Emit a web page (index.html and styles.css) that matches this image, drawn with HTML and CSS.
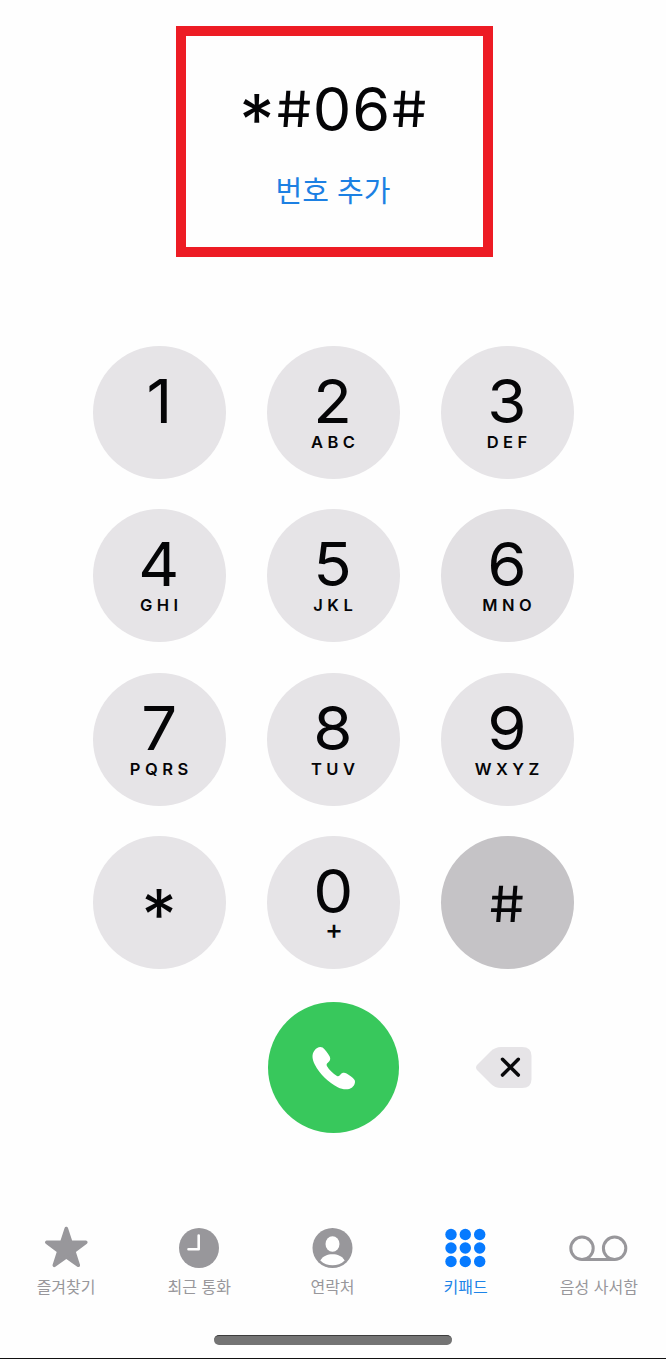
FILE: index.html
```html
<!DOCTYPE html>
<html lang="ko">
<head>
<meta charset="utf-8">
<title>키패드</title>
<link rel="stylesheet" href="styles.css">
</head>
<body>
<div class="phone">
  <header class="entry">
    <div class="number"><span class="star">*</span><span class="hash">#</span><span class="num">0</span><span class="num">6</span><span class="hash">#</span></div>
    <a class="add">번호 추가</a>
  </header>

  <main class="keypad">
    <button class="key"><span class="digit">1</span></button>
    <button class="key"><span class="digit">2</span><span class="letters">ABC</span></button>
    <button class="key"><span class="digit">3</span><span class="letters">DEF</span></button>
    <button class="key"><span class="digit">4</span><span class="letters">GHI</span></button>
    <button class="key"><span class="digit">5</span><span class="letters">JKL</span></button>
    <button class="key key-soft"><span class="digit">6</span><span class="letters">MNO</span></button>
    <button class="key"><span class="digit">7</span><span class="letters">PQRS</span></button>
    <button class="key"><span class="digit">8</span><span class="letters">TUV</span></button>
    <button class="key"><span class="digit">9</span><span class="letters">WXYZ</span></button>
    <button class="key"><span class="star key-star">*</span></button>
    <button class="key"><span class="digit">0</span><span class="plus">+</span></button>
    <button class="key key-pressed"><span class="hash key-hash">#</span></button>
  </main>

  <div class="actions">
    <button class="call" aria-label="통화">
      <svg width="131" height="131" viewBox="0 0 131 131"><path fill="#fff" d="M46.500 48.500C48.500 45.400 52.200 44 54.600 45.600C57 47.500 59.900 51.500 61.700 54.600C62.900 57.100 61.900 59.300 60.100 60.600C58.800 61.600 58.200 62.600 58.900 64C61.200 68 65 71.700 69 73.900C70.400 74.600 71.400 74 72.300 72.800C73.900 70.700 76.300 70.300 78.600 71.600C81.700 73.400 84.800 75.700 86.400 77.700C87.800 79.800 86.700 83.300 84.100 85.400C80.500 88.200 75 87.900 69.700 85.200C60.700 80.500 51.600 71.800 46.900 62.700C44.100 57.200 43.500 52.400 46.500 48.500Z"/></svg>
    </button>
    <button class="delete" aria-label="삭제">
      <svg width="56" height="41" viewBox="0 0 56 41"><path fill="#e6e4e7" d="M1 18L14.500 4.500Q19 0 25 0H46Q55.500 0 55.500 9V32Q55.500 41 46 41H25Q19 41 14.500 36.500L1 23Q-1 20.500 1 18Z"/><path d="M26.500 12.300L42.300 28.100M42.300 12.300L26.500 28.100" stroke="#09090b" stroke-width="3.500" stroke-linecap="round"/></svg>
    </button>
  </div>

  <nav class="tabs">
    <a class="tab"><svg width="60" height="44" viewBox="0 0 60 44"><path d="M30.300 3.500L34.800 17.300H49.800L37.800 26.300L42.300 40.300L30.300 31.700L18.300 40.300L22.800 26.300L10.800 17.300H25.800Z" fill="#98979b" stroke="#98979b" stroke-width="3.600" stroke-linejoin="round"/></svg><span>즐겨찾기</span></a>
    <a class="tab"><svg width="60" height="44" viewBox="0 0 60 44"><circle cx="30" cy="23" r="20" fill="#98979b"/><path d="M29.700 10.500V24.200H19.500" fill="none" stroke="#fff" stroke-width="2.600" stroke-linecap="round" stroke-linejoin="round"/></svg><span>최근 통화</span></a>
    <a class="tab"><svg width="60" height="44" viewBox="0 0 60 44"><circle cx="30.500" cy="23" r="20" fill="#98979b"/><ellipse cx="30.500" cy="19" rx="7" ry="7.700" fill="#fff"/><path d="M18.300 35.500C21 31 25.500 29.300 30.500 29.300S40 31 42.700 35.500C39.300 38.900 35 40.300 30.500 40.300S21.700 38.900 18.300 35.500Z" fill="#fff"/></svg><span>연락처</span></a>
    <a class="tab tab-active"><svg width="60" height="44" viewBox="0 0 60 44" fill="#067aff"><circle cx="16" cy="9.500" r="5.700"/><circle cx="30.300" cy="9.500" r="5.700"/><circle cx="44.700" cy="9.500" r="5.700"/><circle cx="16" cy="23" r="5.700"/><circle cx="30.300" cy="23" r="5.700"/><circle cx="44.700" cy="23" r="5.700"/><circle cx="16" cy="36.500" r="5.700"/><circle cx="30.300" cy="36.500" r="5.700"/><circle cx="44.700" cy="36.500" r="5.700"/></svg><span>키패드</span></a>
    <a class="tab"><svg width="60" height="44" viewBox="0 0 60 44" fill="none" stroke="#98979b" stroke-width="3"><circle cx="14" cy="23.300" r="11.200"/><circle cx="46.600" cy="23.300" r="11.200"/><path d="M14 34.500H46.600"/></svg><span>음성 사서함</span></a>
  </nav>
  <div class="home"></div>
</div>
</body>
</html>
```
FILE: styles.css
```css
* { box-sizing: border-box; }
body { margin: 0; background: #fefefe; font-family: Inter, "Noto Sans CJK KR", sans-serif; color: #050507; }
button { border: 0; padding: 0; margin: 0; background: none; color: inherit; font: inherit; }
svg { display: block; }
.phone { display: flex; flex-direction: column; width: 666px; height: 1359px; padding-top: 26px; border-bottom: 1px solid #111; overflow: hidden; }
.entry { width: 317px; height: 231px; margin-left: 176px; border: 10px solid #ed1c24; display: flex; flex-direction: column; align-items: center; padding-top: 43px; flex: none; }
.number { display: flex; height: 60px; line-height: 60px; font-size: 60px; margin-left: 1px; }
.number span { width: 38.300px; text-align: center; }
.number .star { width: 36px; padding-top: 11px; margin-left: -3px; }
.hash { font-size: 50px; transform: skewX(6deg) scaleX(1.12); }
.star { font-size: 70px; font-weight: 400; }
.num { transform: scaleX(1.02); }
.add { margin: 28px 3px 0 0; font: 400 29px/44px "Noto Sans CJK KR", sans-serif; color: #1c80e3; }
.keypad { display: grid; grid-template-columns: repeat(3, 133px); grid-auto-rows: 133px; column-gap: 41px; row-gap: 30.600px; margin: 88.500px 0 0 92.500px; flex: none; }
.key { display: flex; flex-direction: column; align-items: center; border-radius: 50%; background: #e6e4e7; padding-top: 25px; }
.key-soft { background: #e2e0e3; }
.key-pressed { background: #c5c3c6; }
.digit { font-size: 61px; line-height: 61px; height: 61px; transform: scaleX(1.04); }
.letters { font-size: 16.500px; font-weight: 600; line-height: 20px; letter-spacing: 4.500px; padding-left: 4.500px; }
.plus { font-size: 27px; font-weight: 500; line-height: 16px; padding-left: 2px; }
.key-hash { line-height: 60px; margin-top: 13px; }
.key-star { line-height: 60px; margin-top: 24px; }
.actions { display: grid; grid-template-columns: 131px 56px; column-gap: 76.500px; align-items: center; margin: 32.500px 0 0 268px; flex: none; }
.call { width: 131px; height: 131px; border-radius: 50%; background: #38c85c; }
.tabs { display: grid; grid-template-columns: repeat(5, 1fr); margin: 92.500px 1px 0 -1px; flex: none; }
.tab { display: flex; flex-direction: column; align-items: center; color: #98979b; font: 400 16px/24px "Noto Sans CJK KR", sans-serif; }
.tab span { margin-top: 5px; padding-left: 1px; white-space: nowrap; }
.tab-active { color: #1d84e8; }
.home { width: 238px; height: 10px; margin: 37px 0 0 214.400px; border-radius: 5px; background: #747474; border-top: 1px solid #3c3c3c; flex: none; }
```
